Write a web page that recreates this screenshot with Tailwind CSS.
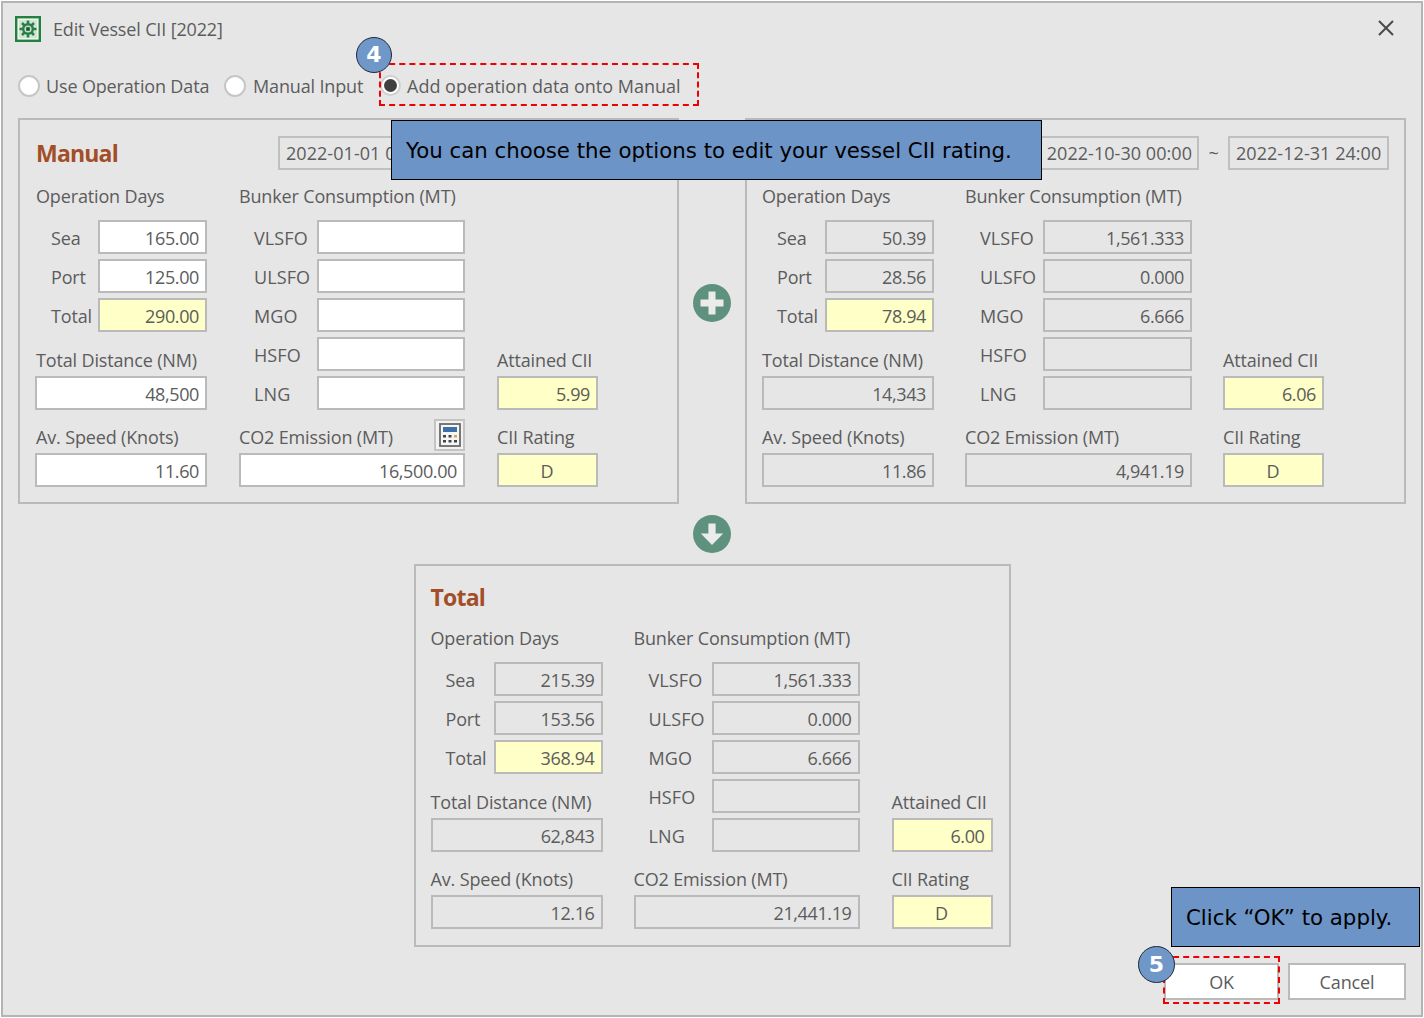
<!DOCTYPE html>
<html>
<head>
<meta charset="utf-8">
<script src="https://cdn.jsdelivr.net/npm/@tailwindcss/browser@4"></script>
</head>
<body class="m-0 bg-white">
<div class="relative w-[1424px] h-[1018px] p-px bg-white overflow-hidden font-['Open_Sans',sans-serif] text-[18px] leading-[24px] text-[#5c5c5c] tracking-[-0.15px]">
<div class="w-[1422px] h-[1016px] border-2 border-[#b4b4b4] bg-[#e6e6e6] flex flex-col">

  <!-- title bar -->
  <div class="h-[52px] shrink-0 flex items-center pl-[12px] pr-[26px]">
    <svg class="w-[26px] h-[26px] mr-[12px]" viewBox="0 0 26 26">
      <rect x="1.2" y="1.2" width="23.6" height="23.6" fill="#eef5ee" stroke="#23803f" stroke-width="2.4"/>
      <rect x="4" y="4" width="18" height="18" fill="#d3e6d6"/>
      <path d="M13 4.5v17M4.5 13h17M7 7l12 12M19 7L7 19" stroke="#2a7f47" stroke-width="2.6"/>
      <circle cx="13" cy="13" r="6" fill="#2a7f47"/>
      <circle cx="13" cy="13" r="3.6" fill="#c9e0cd"/>
      <rect x="11.2" y="11.2" width="3.6" height="3.6" fill="#17592c"/>
    </svg>
    <span>Edit Vessel CII [2022]</span>
    <svg class="ml-auto w-[18px] h-[18px] -translate-y-px" viewBox="0 0 18 18"><path d="M2 2l14 14M16 2L2 16" stroke="#4a4a4a" stroke-width="2" fill="none"/></svg>
  </div>

  <!-- radios -->
  <div class="h-[63px] shrink-0 flex items-center pl-[15px] pb-[2px]">
    <span class="w-[22px] h-[22px] rounded-full border-2 border-[#c6c6c6] bg-white mr-[6px]"></span>
    <span class="w-[178px]">Use Operation Data</span>
    <span class="w-[22px] h-[22px] rounded-full border-2 border-[#c6c6c6] bg-white mr-[7px]"></span>
    <span class="w-[127px]">Manual Input</span>
    <span class="w-[21px] h-[21px] rounded-full border-2 border-[#d0d0d0] bg-white mr-[6px] flex items-center justify-center"><span class="w-[13px] h-[13px] rounded-full bg-[#404040]"></span></span>
    <span class="tracking-normal">Add operation data onto Manual</span>
  </div>

  <!-- top panels -->
  <div class="flex pl-[15px] shrink-0">
    <!-- Manual -->
    <div class="w-[661px] h-[386px] border-2 border-[#bababa] pt-[16px] pl-[15px]">
      <div class="h-[34px] flex items-center">
        <span class="w-[243px] pl-px text-[23px] font-bold text-[#a24e28] tracking-[-0.8px]">Manual</span>
        <span class="w-[161px] h-[34px] border-2 border-[#c0c0c0] flex items-center pl-[6px] tracking-[0.05px]">2022-01-01 0</span>
      </div>
      <div class="flex">
        <div class="w-[172px] flex flex-col">
          <div class="h-[50px] flex items-end pb-[12px] pl-px">Operation Days</div>
          <div class="flex flex-col gap-[5px]">
            <div class="flex justify-between items-center pl-[16px]"><span class="pt-[2px]">Sea</span><div class="w-[109px] h-[34px] border-2 border-[#bababa] bg-white flex items-center justify-end pr-[6px] pt-[2px] tracking-[-0.38px]">165.00</div></div>
            <div class="flex justify-between items-center pl-[16px]"><span class="pt-[2px]">Port</span><div class="w-[109px] h-[34px] border-2 border-[#bababa] bg-white flex items-center justify-end pr-[6px] pt-[2px] tracking-[-0.38px]">125.00</div></div>
            <div class="flex justify-between items-center pl-[16px]"><span class="pt-[2px]">Total</span><div class="w-[109px] h-[34px] border-2 border-[#bababa] bg-[#ffffc8] flex items-center justify-end pr-[6px] pt-[2px] tracking-[-0.38px]">290.00</div></div>
          </div>
          <div class="h-[44px] flex items-end pb-[4px] pl-px">Total Distance (NM)</div>
          <div class="h-[34px] border-2 border-[#bababa] bg-white flex items-center justify-end pr-[6px] pt-[2px] tracking-[-0.38px]">48,500</div>
          <div class="h-[43px] flex items-end pb-[4px] pl-px">Av. Speed (Knots)</div>
          <div class="h-[34px] border-2 border-[#bababa] bg-white flex items-center justify-end pr-[6px] pt-[2px] tracking-[-0.38px]">11.60</div>
        </div>
        <div class="w-[226px] ml-[32px] flex flex-col">
          <div class="h-[50px] flex items-end pb-[12px]">Bunker Consumption (MT)</div>
          <div class="flex flex-col gap-[5px] tracking-[0.1px]">
            <div class="flex justify-between items-center pl-[15px]"><span class="pt-[2px]">VLSFO</span><div class="w-[148px] h-[34px] border-2 border-[#bababa] bg-white"></div></div>
            <div class="flex justify-between items-center pl-[15px]"><span class="pt-[2px]">ULSFO</span><div class="w-[148px] h-[34px] border-2 border-[#bababa] bg-white"></div></div>
            <div class="flex justify-between items-center pl-[15px]"><span class="pt-[2px]">MGO</span><div class="w-[148px] h-[34px] border-2 border-[#bababa] bg-white"></div></div>
            <div class="flex justify-between items-center pl-[15px]"><span class="pt-[2px]">HSFO</span><div class="w-[148px] h-[34px] border-2 border-[#bababa] bg-white"></div></div>
            <div class="flex justify-between items-center pl-[15px]"><span class="pt-[2px]">LNG</span><div class="w-[148px] h-[34px] border-2 border-[#bababa] bg-white"></div></div>
          </div>
          <div class="h-[43px] flex items-end justify-between pb-[4px]">
            <span>CO2 Emission (MT)</span>
            <span class="w-[31px] h-[32px] -mb-[2px] border-2 border-[#c4c4c4] bg-[#f2f2f2] flex items-center justify-center">
              <svg class="w-[22px] h-[24px]" viewBox="0 0 22 24">
                <rect x="1" y="1" width="20" height="22" fill="#f6f6f6" stroke="#6a6a6a" stroke-width="1.8"/>
                <rect x="4" y="4" width="14" height="5" fill="#3f6fa8"/>
                <g fill="#444"><rect x="4" y="12" width="3" height="2.5"/><rect x="9.5" y="12" width="3" height="2.5"/><rect x="4" y="17" width="3" height="2.5"/><rect x="9.5" y="17" width="3" height="2.5"/><rect x="15" y="17" width="3" height="2.5"/></g>
                <rect x="15" y="12" width="3" height="2.5" fill="#e8a04a"/>
              </svg>
            </span>
          </div>
          <div class="h-[34px] border-2 border-[#bababa] bg-white flex items-center justify-end pr-[6px] pt-[2px] tracking-[-0.38px]">16,500.00</div>
        </div>
        <div class="w-[101px] ml-[32px] flex flex-col justify-end">
          <div class="h-[44px] flex items-end pb-[4px]">Attained CII</div>
          <div class="h-[34px] border-2 border-[#bababa] bg-[#ffffc8] flex items-center justify-end pr-[6px] pt-[2px] tracking-[-0.38px]">5.99</div>
          <div class="h-[43px] flex items-end pb-[4px]">CII Rating</div>
          <div class="h-[34px] border-2 border-[#bababa] bg-[#ffffc8] flex items-center justify-center pr-[1px] pt-[2px]">D</div>
        </div>
      </div>
    </div>

    <!-- plus -->
    <div class="w-[66px] flex justify-center pt-[166px]">
      <svg class="w-[38px] h-[38px]" viewBox="0 0 38 38"><circle cx="19" cy="19" r="19" fill="#5f917f"/><path d="M19 7.5v23M7.5 19h23" stroke="#ebebeb" stroke-width="7"/></svg>
    </div>

    <!-- Operation -->
    <div class="w-[661px] h-[386px] border-2 border-[#bababa] pt-[16px] pl-[15px] pr-[15px]">
      <div class="h-[34px] flex items-center justify-end">
        <span class="w-[160px] h-[34px] border-2 border-[#c0c0c0] flex items-center justify-end pr-[5px] tracking-[0.05px]">2022-10-30 00:00</span>
        <span class="w-[29px] text-center">~</span>
        <span class="w-[161px] h-[34px] border-2 border-[#c0c0c0] flex items-center pl-[6px] tracking-[0.05px]">2022-12-31 24:00</span>
      </div>
      <div class="flex">
        <div class="w-[172px] flex flex-col">
          <div class="h-[50px] flex items-end pb-[12px]">Operation Days</div>
          <div class="flex flex-col gap-[5px]">
            <div class="flex justify-between items-center pl-[15px]"><span class="pt-[2px]">Sea</span><div class="w-[109px] h-[34px] border-2 border-[#bababa] flex items-center justify-end pr-[6px] pt-[2px] tracking-[-0.38px]">50.39</div></div>
            <div class="flex justify-between items-center pl-[15px]"><span class="pt-[2px]">Port</span><div class="w-[109px] h-[34px] border-2 border-[#bababa] flex items-center justify-end pr-[6px] pt-[2px] tracking-[-0.38px]">28.56</div></div>
            <div class="flex justify-between items-center pl-[15px]"><span class="pt-[2px]">Total</span><div class="w-[109px] h-[34px] border-2 border-[#bababa] bg-[#ffffc8] flex items-center justify-end pr-[6px] pt-[2px] tracking-[-0.38px]">78.94</div></div>
          </div>
          <div class="h-[44px] flex items-end pb-[4px]">Total Distance (NM)</div>
          <div class="h-[34px] border-2 border-[#bababa] flex items-center justify-end pr-[6px] pt-[2px] tracking-[-0.38px]">14,343</div>
          <div class="h-[43px] flex items-end pb-[4px]">Av. Speed (Knots)</div>
          <div class="h-[34px] border-2 border-[#bababa] flex items-center justify-end pr-[6px] pt-[2px] tracking-[-0.38px]">11.86</div>
        </div>
        <div class="w-[227px] ml-[31px] flex flex-col">
          <div class="h-[50px] flex items-end pb-[12px]">Bunker Consumption (MT)</div>
          <div class="flex flex-col gap-[5px] tracking-[0.1px]">
            <div class="flex justify-between items-center pl-[15px]"><span class="pt-[2px]">VLSFO</span><div class="w-[149px] h-[34px] border-2 border-[#bababa] flex items-center justify-end pr-[6px] pt-[2px] tracking-[-0.38px]">1,561.333</div></div>
            <div class="flex justify-between items-center pl-[15px]"><span class="pt-[2px]">ULSFO</span><div class="w-[149px] h-[34px] border-2 border-[#bababa] flex items-center justify-end pr-[6px] pt-[2px] tracking-[-0.38px]">0.000</div></div>
            <div class="flex justify-between items-center pl-[15px]"><span class="pt-[2px]">MGO</span><div class="w-[149px] h-[34px] border-2 border-[#bababa] flex items-center justify-end pr-[6px] pt-[2px] tracking-[-0.38px]">6.666</div></div>
            <div class="flex justify-between items-center pl-[15px]"><span class="pt-[2px]">HSFO</span><div class="w-[149px] h-[34px] border-2 border-[#bababa]"></div></div>
            <div class="flex justify-between items-center pl-[15px]"><span class="pt-[2px]">LNG</span><div class="w-[149px] h-[34px] border-2 border-[#bababa]"></div></div>
          </div>
          <div class="h-[43px] flex items-end pb-[4px]">CO2 Emission (MT)</div>
          <div class="h-[34px] border-2 border-[#bababa] flex items-center justify-end pr-[6px] pt-[2px] tracking-[-0.38px]">4,941.19</div>
        </div>
        <div class="w-[101px] ml-[31px] flex flex-col justify-end">
          <div class="h-[44px] flex items-end pb-[4px]">Attained CII</div>
          <div class="h-[34px] border-2 border-[#bababa] bg-[#ffffc8] flex items-center justify-end pr-[6px] pt-[2px] tracking-[-0.38px]">6.06</div>
          <div class="h-[43px] flex items-end pb-[4px]">CII Rating</div>
          <div class="h-[34px] border-2 border-[#bababa] bg-[#ffffc8] flex items-center justify-center pr-[1px] pt-[2px]">D</div>
        </div>
      </div>
    </div>
  </div>

  <!-- arrow -->
  <div class="h-[60px] shrink-0 flex items-center justify-center">
    <svg class="w-[38px] h-[38px]" viewBox="0 0 38 38"><circle cx="19" cy="19" r="19" fill="#5f917f"/><path d="M15.4 8.5h7.2v10h7.6L19 30 7.8 18.5h7.6z" fill="#ebebeb"/></svg>
  </div>

  <!-- Total -->
  <div class="flex justify-center shrink-0">
    <div class="w-[597px] h-[383px] border-2 border-[#bababa] pt-[15px] pl-[15px]">
      <div class="h-[34px] flex items-center text-[23px] font-bold text-[#a24e28] tracking-[-0.8px] -translate-y-px">Total</div>
      <div class="flex">
        <div class="w-[172px] flex flex-col">
          <div class="h-[47px] flex items-end pb-[12px]">Operation Days</div>
          <div class="flex flex-col gap-[5px]">
            <div class="flex justify-between items-center pl-[15px]"><span class="pt-[2px]">Sea</span><div class="w-[109px] h-[34px] border-2 border-[#bababa] flex items-center justify-end pr-[6px] pt-[2px] tracking-[-0.38px]">215.39</div></div>
            <div class="flex justify-between items-center pl-[15px]"><span class="pt-[2px]">Port</span><div class="w-[109px] h-[34px] border-2 border-[#bababa] flex items-center justify-end pr-[6px] pt-[2px] tracking-[-0.38px]">153.56</div></div>
            <div class="flex justify-between items-center pl-[15px]"><span class="pt-[2px]">Total</span><div class="w-[109px] h-[34px] border-2 border-[#bababa] bg-[#ffffc8] flex items-center justify-end pr-[6px] pt-[2px] tracking-[-0.38px]">368.94</div></div>
          </div>
          <div class="h-[44px] flex items-end pb-[4px]">Total Distance (NM)</div>
          <div class="h-[34px] border-2 border-[#bababa] flex items-center justify-end pr-[6px] pt-[2px] tracking-[-0.38px]">62,843</div>
          <div class="h-[43px] flex items-end pb-[4px]">Av. Speed (Knots)</div>
          <div class="h-[34px] border-2 border-[#bababa] flex items-center justify-end pr-[6px] pt-[2px] tracking-[-0.38px]">12.16</div>
        </div>
        <div class="w-[226px] ml-[31px] flex flex-col">
          <div class="h-[47px] flex items-end pb-[12px]">Bunker Consumption (MT)</div>
          <div class="flex flex-col gap-[5px] tracking-[0.1px]">
            <div class="flex justify-between items-center pl-[15px]"><span class="pt-[2px]">VLSFO</span><div class="w-[148px] h-[34px] border-2 border-[#bababa] flex items-center justify-end pr-[6px] pt-[2px] tracking-[-0.38px]">1,561.333</div></div>
            <div class="flex justify-between items-center pl-[15px]"><span class="pt-[2px]">ULSFO</span><div class="w-[148px] h-[34px] border-2 border-[#bababa] flex items-center justify-end pr-[6px] pt-[2px] tracking-[-0.38px]">0.000</div></div>
            <div class="flex justify-between items-center pl-[15px]"><span class="pt-[2px]">MGO</span><div class="w-[148px] h-[34px] border-2 border-[#bababa] flex items-center justify-end pr-[6px] pt-[2px] tracking-[-0.38px]">6.666</div></div>
            <div class="flex justify-between items-center pl-[15px]"><span class="pt-[2px]">HSFO</span><div class="w-[148px] h-[34px] border-2 border-[#bababa]"></div></div>
            <div class="flex justify-between items-center pl-[15px]"><span class="pt-[2px]">LNG</span><div class="w-[148px] h-[34px] border-2 border-[#bababa]"></div></div>
          </div>
          <div class="h-[43px] flex items-end pb-[4px]">CO2 Emission (MT)</div>
          <div class="h-[34px] border-2 border-[#bababa] flex items-center justify-end pr-[6px] pt-[2px] tracking-[-0.38px]">21,441.19</div>
        </div>
        <div class="w-[101px] ml-[32px] flex flex-col justify-end">
          <div class="h-[44px] flex items-end pb-[4px]">Attained CII</div>
          <div class="h-[34px] border-2 border-[#bababa] bg-[#ffffc8] flex items-center justify-end pr-[6px] pt-[2px] tracking-[-0.38px]">6.00</div>
          <div class="h-[43px] flex items-end pb-[4px]">CII Rating</div>
          <div class="h-[34px] border-2 border-[#bababa] bg-[#ffffc8] flex items-center justify-center pr-[1px] pt-[2px]">D</div>
        </div>
      </div>
    </div>
  </div>

  <!-- footer -->
  <div class="mt-[16px] flex justify-end gap-[9px] pr-[15px]">
    <div class="w-[115px] h-[37px] border-2 border-[#bababa] bg-white flex items-center justify-center">OK</div>
    <div class="w-[118px] h-[37px] border-2 border-[#bababa] bg-white flex items-center justify-center">Cancel</div>
  </div>
</div>

<!-- annotations -->
<div class="absolute left-[379px] top-[63px] w-[320px] h-[43px] border-2 border-dashed border-[#f00000]"></div>
<div class="absolute left-[356px] top-[37px] w-[36px] h-[36px] rounded-full bg-[#6f97c8] border border-[#1c2a3a] flex items-center justify-center text-white font-bold text-[22px] font-['DejaVu_Sans',sans-serif] tracking-normal">4</div>
<div class="absolute left-[391px] top-[120px] w-[651px] h-[60px] bg-[#6c94c6] border border-black flex items-center pl-[14px] pt-[2px] text-black text-[21.3px] font-['DejaVu_Sans',sans-serif] tracking-normal whitespace-nowrap">You can choose the options to edit your vessel CII rating.</div>
<div class="absolute left-[1171px] top-[887px] w-[249px] h-[60px] bg-[#6c94c6] border border-black flex items-center pl-[14px] pt-[2px] text-black text-[21.3px] font-['DejaVu_Sans',sans-serif] tracking-normal whitespace-nowrap">Click “OK” to apply.</div>
<div class="absolute left-[1163px] top-[956px] w-[117px] h-[48px] border-2 border-dashed border-[#f00000]"></div>
<div class="absolute left-[1138px] top-[946px] w-[37px] h-[37px] rounded-full bg-[#6f97c8] border border-[#1c2a3a] flex items-center justify-center text-white font-bold text-[22px] font-['DejaVu_Sans',sans-serif] tracking-normal">5</div>
</div>
</body>
</html>
